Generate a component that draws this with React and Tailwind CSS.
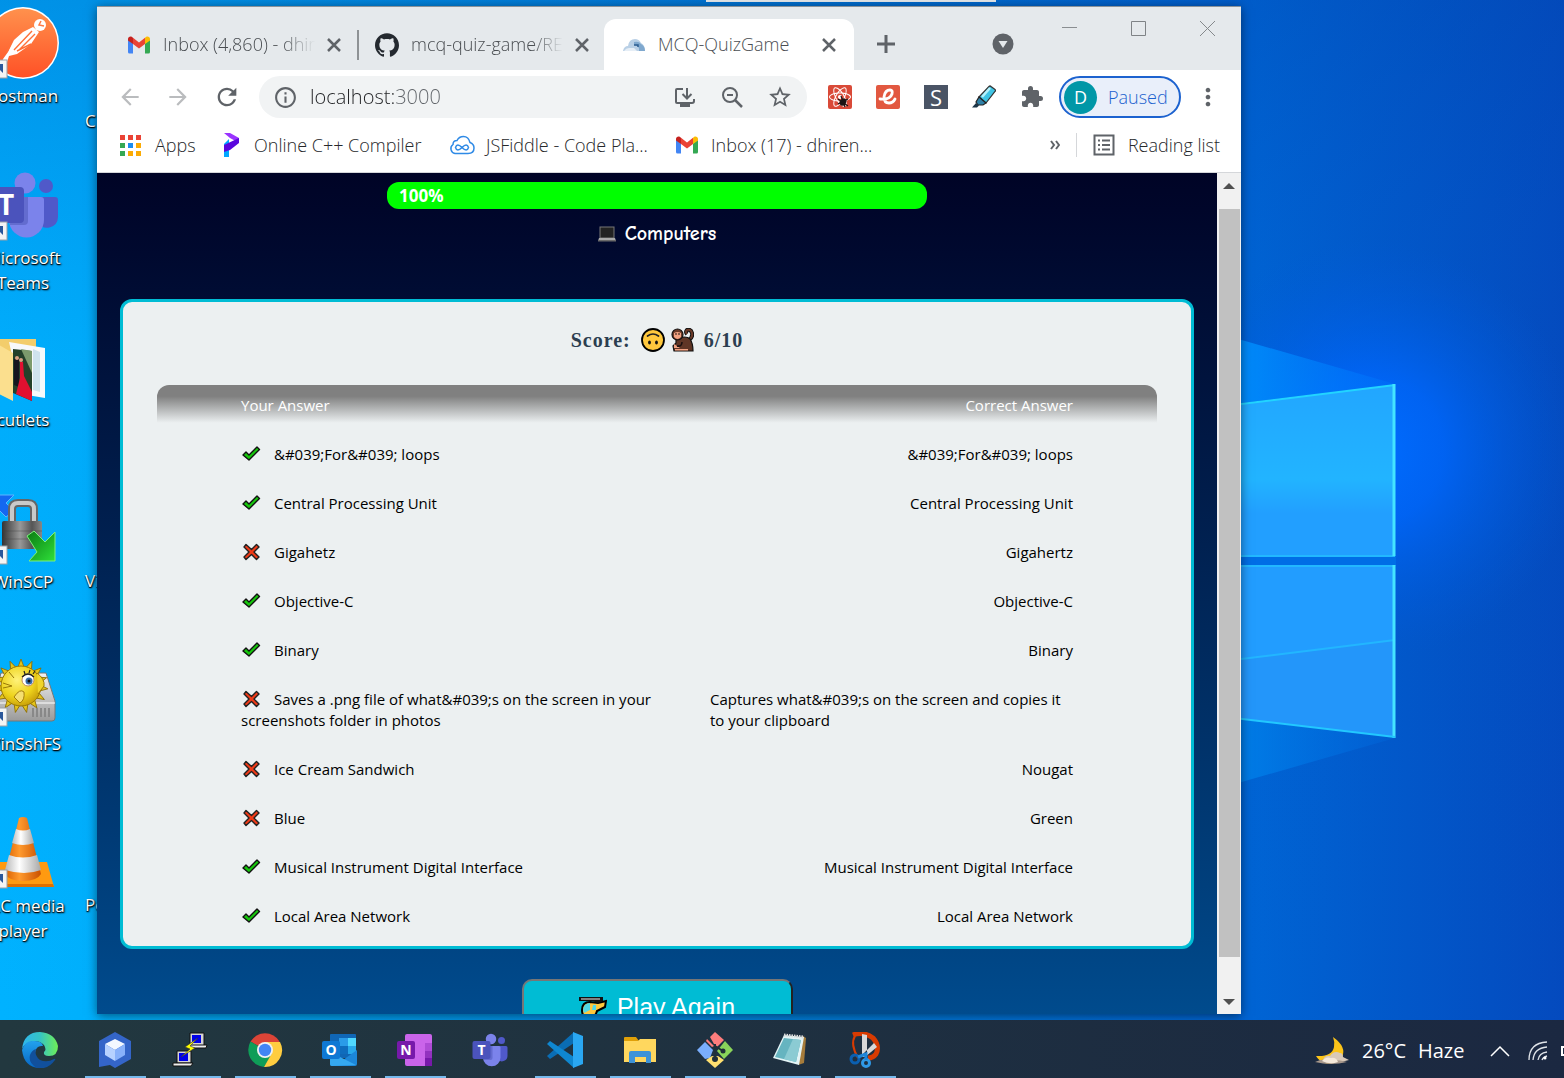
import React from "react";
import {
  MdArrowBack,
  MdArrowForward,
  MdExtension,
  MdInfoOutline,
  MdMoreVert,
  MdRefresh,
  MdStarBorder,
} from "react-icons/md";
import { SiGithub, SiReact } from "react-icons/si";

/* ---------- shared drawings ---------- */

function GmailIcon() {
  return (
    <svg width="24" height="24" viewBox="0 0 24 24" aria-hidden="true" className="shrink-0">
      <path d="M1 6.5V19a1.5 1.5 0 0 0 1.500 1.500H6V10.500z" fill="#4285f4" />
      <path d="M23 6.500V19a1.500 1.500 0 0 1-1.500 1.500H18V10.500z" fill="#34a853" />
      <path d="M6 11V4.800l6 4.700 6-4.700V11l-6 4.600z" fill="#ea4335" />
      <path d="M1 6v1.600L6 11V4.800L5 4C3.300 2.900 1 4 1 6z" fill="#c5221f" />
      <path d="M23 6v1.600L18 11V4.800L19 4c1.700-1.100 4 0 4 2z" fill="#fbbc04" />
    </svg>
  );
}

function TeamsShape({ size }) {
  return (
    <svg width={size} height={size} viewBox="0 0 72 72" aria-hidden="true">
      <circle cx="59" cy="17" r="7" fill="#5059c9" />
      <path d="M48 28h20a3 3 0 0 1 3 3v17a11 11 0 0 1-20 6z" fill="#5059c9" />
      <circle cx="38" cy="14" r="10.500" fill="#7b83eb" />
      <path d="M22 28h32a3 3 0 0 1 3 3v20a17.500 17.500 0 0 1-35 0z" fill="#7b83eb" />
      <path d="M24 28h17v24a4 4 0 0 1-4 4H23z" fill="#5a62c3" opacity=".7" />
      <rect x="1" y="18" width="36" height="36" rx="4" fill="#4b53bc" />
      <text x="19" y="46" textAnchor="middle" fontFamily="Open Sans, sans-serif" fontWeight="700" fontSize="28" fill="#fff">
        T
      </text>
    </svg>
  );
}

function Shortcut() {
  return (
    <g>
      <rect x="1" y="53" width="19" height="18" fill="#f4f4f4" stroke="#9aa0a6" />
      <path d="M5 68c0-6 3-7 5-7l-3-4h9v9l-3-3c-3 0-5 1-6 5z" fill="#2b579a" />
    </g>
  );
}

/* ---------- desktop icons ---------- */

function PostmanArt() {
  return (
    <svg width="72" height="72" viewBox="0 0 72 72" aria-hidden="true">
      <defs>
        <linearGradient id="pm" x1="0" y1="0" x2="0" y2="1">
          <stop offset="0" stopColor="#ff914d" />
          <stop offset="1" stopColor="#ff5126" />
        </linearGradient>
      </defs>
      <circle cx="36" cy="36" r="36" fill="#fff" />
      <circle cx="36" cy="36" r="34.500" fill="url(#pm)" />
      <circle cx="53" cy="18" r="6" fill="#fff" />
      <path d="M54 14l-2 4 5 1" fill="none" stroke="#ff7a45" strokeWidth="1.500" />
      <path d="M46 20l6 5-8 12-14 10-8 2-2 6-7 8 3-11 5-7 6-12 9-8z" fill="#fff" />
      <path d="M45 24L27 43M48 27L32 43M25 33l-5 12M44 37l-14 7" stroke="#ff7038" strokeWidth="1.400" />
      <Shortcut />
    </svg>
  );
}

function TeamsArt() {
  return (
    <div className="relative h-[72px] w-[72px]">
      <TeamsShape size={72} />
      <svg width="72" height="72" viewBox="0 0 72 72" className="absolute inset-0" aria-hidden="true">
        <Shortcut />
      </svg>
    </div>
  );
}

function FolderArt() {
  return (
    <svg width="72" height="72" viewBox="0 0 72 72" aria-hidden="true">
      <path d="M4 8h45v54H4z" fill="#f3cd6b" />
      <path d="M22 11l36 6v50l-24-4z" fill="#f7f9fb" />
      <path d="M46 18l7 3v40l-7-2z" fill="#cfe3ee" />
      <path d="M26 18l19 2v50l-19-8z" fill="#24402a" />
      <path d="M34 18l11 2v22z" fill="#7c9a6c" />
      <path d="M27 28h5v28l-5-2z" fill="#15161f" />
      <circle cx="30" cy="27" r="2" fill="#d9a184" />
      <circle cx="34" cy="29" r="2" fill="#d9a184" />
      <path d="M33 31h3l1 14 8 16v9l-16-7 4-16z" fill="#e01030" />
      <path d="M2 8l24 14v48L2 58z" fill="#fbdf8e" />
    </svg>
  );
}

function LockArt() {
  return (
    <svg width="72" height="72" viewBox="0 0 72 72" aria-hidden="true">
      <defs>
        <linearGradient id="lk" x1="0" x2="1">
          <stop offset="0" stopColor="#333" />
          <stop offset=".45" stopColor="#999" />
          <stop offset=".75" stopColor="#555" />
          <stop offset="1" stopColor="#888" />
        </linearGradient>
        <linearGradient id="gr" x1="0" y1="0" x2="1" y2="1">
          <stop offset="0" stopColor="#0a7a12" />
          <stop offset="1" stopColor="#2fe03a" />
        </linearGradient>
      </defs>
      <path d="M2 2h25l-8 8 8 8-8 6-9-9-8 8z" fill="#1468f0" stroke="#5db4ff" />
      <path d="M25 32V16q0-6 6-6h10q6 0 6 6v16" fill="none" stroke="#666" strokeWidth="8" />
      <path d="M25 32V16q0-6 6-6h10q6 0 6 6v16" fill="none" stroke="#c9c9c9" strokeWidth="4" />
      <rect x="15" y="28" width="40" height="28" rx="2" fill="url(#lk)" />
      <path d="M15 38h40M15 46h40" stroke="#444" strokeOpacity=".4" />
      <path d="M40 43l7-5 11 11 10-10v29H42l8-9z" fill="url(#gr)" stroke="#7cf07c" />
      <Shortcut />
    </svg>
  );
}

function PufferArt() {
  const spikes = [0, 24, 48, 72, 96, 120, 144, 168, 192, 216, 240, 264, 288, 312, 336];
  return (
    <svg width="72" height="72" viewBox="0 0 72 72" aria-hidden="true">
      <defs>
        <linearGradient id="dr" x1="0" y1="0" x2="0" y2="1">
          <stop offset="0" stopColor="#f2f2f2" />
          <stop offset="1" stopColor="#9a9a9a" />
        </linearGradient>
        <radialGradient id="pf" cx=".4" cy=".35" r=".7">
          <stop offset="0" stopColor="#fff27a" />
          <stop offset=".6" stopColor="#eed31c" />
          <stop offset="1" stopColor="#c49a08" />
        </radialGradient>
      </defs>
      <path d="M14 18h45l9 28v17q0 3-3 3H8V40z" fill="url(#dr)" stroke="#777" />
      <path d="M8 48h60" stroke="#fff" />
      <path d="M46 53v9M50 53v9M54 53v9M58 53v9M62 53v9" stroke="#888" strokeWidth="2" />
      {spikes.map((a) => (
        <path key={a} d="M31 12l3-8 3 8z" fill="#e3c41a" stroke="#8a6a00" strokeWidth=".8" transform={`rotate(${a} 34 31)`} />
      ))}
      <circle cx="34" cy="31" r="20" fill="url(#pf)" stroke="#9b7a06" />
      <path d="M50 18q8 6 7 13l-6 8" fill="#f0d52a" stroke="#9b7a06" />
      <circle cx="41" cy="25" r="6" fill="#fff" stroke="#bf8b60" />
      <circle cx="42" cy="26" r="3.500" fill="#356aa8" />
      <circle cx="42" cy="26" r="1.500" fill="#111" />
      <path d="M35 22q6-6 12 0M46 19l2-3M42 18l1-3M38 19l-1-3" fill="none" stroke="#222" strokeWidth="1.200" />
      <path d="M27 42q6-9 10-5 1 8-4 11z" fill="#f5df70" stroke="#a37d0a" />
      <path d="M16 28l9 3-9 2M22 17l5 6" fill="none" stroke="#9b7a06" />
      <Shortcut />
    </svg>
  );
}

function ConeArt() {
  return (
    <svg width="72" height="72" viewBox="0 0 72 72" aria-hidden="true">
      <defs>
        <linearGradient id="cn" x1="0" x2="1">
          <stop offset="0" stopColor="#d95f00" />
          <stop offset=".4" stopColor="#ff9a2e" />
          <stop offset="1" stopColor="#c95000" />
        </linearGradient>
        <linearGradient id="cw" x1="0" x2="1">
          <stop offset="0" stopColor="#b9b9b9" />
          <stop offset=".4" stopColor="#fff" />
          <stop offset="1" stopColor="#a8a8a8" />
        </linearGradient>
      </defs>
      <path d="M12 45h48l7 25H5z" fill="#ff9a10" />
      <path d="M6 67h60l1 3H5z" fill="#e07000" />
      <path d="M32 1q4-2 8 0l14 56q-4 7-18 7t-18-7z" fill="url(#cn)" />
      <path d="M29 12q7 3 14 0l4 14q-11 4-22 0z" fill="url(#cw)" />
      <path d="M22 38q14 5 28 0l4 15q-16 6-36 0z" fill="url(#cw)" />
      <Shortcut />
    </svg>
  );
}

const desktopIcons = [
  { label: "Postman", art: <PostmanArt /> },
  { label: "Microsoft Teams", art: <TeamsArt /> },
  { label: "cutlets", art: <FolderArt /> },
  { label: "WinSCP", art: <LockArt /> },
  { label: "WinSshFS", art: <PufferArt /> },
  { label: "VLC media player", art: <ConeArt /> },
];

function DesktopIcons() {
  const label = "text-[17px] leading-[25px] text-white [text-shadow:1px_1px_2px_#000,0_1px_1px_#000]";
  return (
    <div className="relative w-[97px] shrink-0 overflow-hidden">
      <ul className="-ml-[37px] w-[120px]">
        {desktopIcons.map((it) => (
          <li key={it.label} className="flex h-[162px] flex-col items-center pt-[7px]">
            {it.art}
            <span className={`mt-1 w-[104px] text-center ${label}`}>{it.label}</span>
          </li>
        ))}
      </ul>
      <span className={`absolute left-[85px] top-[108px] ${label}`}>C</span>
      <span className={`absolute left-[85px] top-[568px] ${label}`}>Vi</span>
      <span className={`absolute left-[85px] top-[892px] ${label}`}>Po</span>
    </div>
  );
}

/* ---------- wallpaper ---------- */

function Wallpaper() {
  return (
    <svg className="absolute inset-0 h-full w-full" viewBox="0 0 1564 1020" preserveAspectRatio="none" aria-hidden="true">
      <defs>
        <linearGradient id="bg" x1="0" x2="1">
          <stop offset="0" stopColor="#00b2ff" />
          <stop offset=".1" stopColor="#00aefb" />
          <stop offset=".5" stopColor="#0080dc" />
          <stop offset=".8" stopColor="#0064d4" />
          <stop offset="1" stopColor="#044abe" />
        </linearGradient>
        <linearGradient id="topdim" x1="0" y1="0" x2="0" y2="1">
          <stop offset="0" stopColor="#0048b0" stopOpacity=".3" />
          <stop offset=".35" stopColor="#0058c8" stopOpacity=".06" />
          <stop offset="1" stopColor="#0058c8" stopOpacity="0" />
        </linearGradient>
        <radialGradient id="glow" gradientUnits="userSpaceOnUse" cx="1370" cy="450" r="210">
          <stop offset="0" stopColor="#006cff" />
          <stop offset=".35" stopColor="#0066fc" stopOpacity=".8" />
          <stop offset="1" stopColor="#0058d8" stopOpacity="0" />
        </radialGradient>
        <linearGradient id="pane" x1="0" y1="0" x2="0" y2="1">
          <stop offset="0" stopColor="#22a6ff" />
          <stop offset=".55" stopColor="#22b4ff" />
          <stop offset=".75" stopColor="#229fff" />
          <stop offset="1" stopColor="#229fff" />
        </linearGradient>
        <linearGradient id="beam" x1="0" x2="1">
          <stop offset="0" stopColor="#0098ff" />
          <stop offset="1" stopColor="#0078ff" stopOpacity=".3" />
        </linearGradient>
        <linearGradient id="beam2" x1="0" x2="1">
          <stop offset="0" stopColor="#0086ec" />
          <stop offset="1" stopColor="#006ae0" stopOpacity=".3" />
        </linearGradient>
      </defs>
      <rect width="1564" height="1020" fill="url(#bg)" />
      <rect width="1564" height="1020" fill="url(#topdim)" />
      <rect x="1140" y="230" width="424" height="440" fill="url(#glow)" />
      <path d="M1200 328L1395 384L1200 408z" fill="url(#beam)" />
      <path d="M1200 714L1395 738L1200 794z" fill="url(#beam2)" />
      <rect x="1200" y="555" width="196" height="11" fill="#006ee6" />
      <path d="M1200 409L1395 385V556H1200z" fill="url(#pane)" />
      <path d="M1200 566H1395V737L1200 714z" fill="#229dff" />
      <path d="M1200 664L1395 640V737L1200 714z" fill="#2396fa" />
      <path d="M1200 664L1395 640" stroke="#22b6ff" strokeWidth="2" />
      <path d="M1200 409L1395 385" stroke="#22d4ff" strokeWidth="2" />
      <path d="M1200 556H1395M1200 566H1395" stroke="#22b8ff" strokeWidth="2" />
      <path d="M1394 384V556M1394 565V738" stroke="#44e4ff" strokeWidth="3" />
      <path d="M1200 714L1395 737" stroke="#22c8ff" strokeWidth="2" />
      <rect x="706" y="0" width="290" height="2" fill="#e5e9ec" />
    </svg>
  );
}

/* ---------- browser chrome ---------- */

function TabClose({ name }) {
  return (
    <button type="button" aria-label={`Close ${name}`} className="text-[#5f6368]">
      <svg width="20" height="20" viewBox="0 0 20 20" stroke="currentColor" strokeWidth="2.500">
        <path d="M4 4l12 12M16 4L4 16" />
      </svg>
    </button>
  );
}

function TabStrip() {
  return (
    <div className="flex h-[63px] items-end bg-[#e5e9ec] text-[18px] font-light text-[#4a4e52]">
      <div className="flex h-[51px] w-[260px] items-center pl-[30px]">
        <GmailIcon />
        <span className="ml-3 w-[152px] overflow-hidden whitespace-nowrap [mask-image:linear-gradient(90deg,#000_78%,transparent)]">
          Inbox (4,860) - dhiren
        </span>
        <span className="ml-[9px] flex">
          <TabClose name="Inbox" />
        </span>
      </div>
      <div className="flex h-[51px] items-center">
        <div className="h-[30px] w-[2px] bg-[#8e9295]" />
      </div>
      <div className="flex h-[51px] w-[245px] items-center pl-4">
        <SiGithub size={24} color="#24292f" className="shrink-0" />
        <span className="ml-3 w-[152px] overflow-hidden whitespace-nowrap [mask-image:linear-gradient(90deg,#000_80%,transparent)]">
          mcq-quiz-game/README
        </span>
        <span className="ml-[9px] flex">
          <TabClose name="mcq-quiz-game" />
        </span>
      </div>
      <div className="flex h-[51px] w-[250px] items-center rounded-t-xl bg-white pl-[18px]">
        <svg width="24" height="24" viewBox="0 0 24 24" aria-hidden="true" className="shrink-0">
          <path d="M1 18q1-5 5-5 1-7 7-7 4 0 6 4 4 2 4 8z" fill="#b9d0e6" />
          <path d="M12 9q5-1 7 2 4 2 4 7h-6q1-5-5-6z" fill="#7fa8ce" />
          <path d="M2 18q2-3 5-3h5l3 3z" fill="#e6eef6" />
          <path d="M12 12h4v2" fill="none" stroke="#2c5d91" strokeWidth="1.500" />
        </svg>
        <span className="ml-3 w-[150px] whitespace-nowrap">MCQ-QuizGame</span>
        <span className="ml-[11px] flex">
          <TabClose name="MCQ-QuizGame" />
        </span>
      </div>
      <button type="button" aria-label="New tab" className="mb-[13px] ml-[19px] text-[#5f6368]">
        <svg width="26" height="26" viewBox="0 0 26 26" stroke="currentColor" strokeWidth="3">
          <path d="M4 13h18M13 4v18" />
        </svg>
      </button>
      <div className="flex-1" />
      <button type="button" aria-label="Search tabs" className="mb-[15px] mr-12">
        <svg width="22" height="22" viewBox="0 0 22 22">
          <circle cx="11" cy="11" r="10.500" fill="#5f6368" />
          <path d="M6.500 8h9L11 15z" fill="#e5e9ec" />
        </svg>
      </button>
      <div className="flex items-center gap-[54px] self-start pr-[26px] pt-[14px]">
        <button type="button" aria-label="Minimize">
          <svg width="15" height="15"><path d="M0 6.500h15" stroke="#8a8e91" /></svg>
        </button>
        <button type="button" aria-label="Maximize">
          <svg width="15" height="15"><path d="M.5.5h14v14H.5z" fill="none" stroke="#7f8386" /></svg>
        </button>
        <button type="button" aria-label="Close window">
          <svg width="15" height="15"><path d="M0 0l15 15M15 0L0 15" stroke="#85898c" /></svg>
        </button>
      </div>
    </div>
  );
}

function Toolbar() {
  return (
    <div className="flex h-[54px] items-center bg-white text-[#5f6368]">
      <div className="ml-5 flex gap-[22px]">
        <button type="button" aria-label="Back" className="text-[#babcbe]"><MdArrowBack size={26} /></button>
        <button type="button" aria-label="Forward" className="text-[#babcbe]"><MdArrowForward size={26} /></button>
        <button type="button" aria-label="Reload"><MdRefresh size={28} /></button>
      </div>
      <div className="ml-[18px] flex h-[42px] min-w-0 flex-1 items-center rounded-full bg-[#f1f3f4] px-[14px]">
        <MdInfoOutline size={25} className="shrink-0" />
        <div className="relative ml-3 min-w-0 flex-1 text-[20px]">
          <label className="sr-only" htmlFor="address">Address</label>
          <input
            id="address"
            defaultValue="localhost:3000"
            className="w-full bg-[linear-gradient(90deg,#202124_84px,#5f6368_84px)] bg-clip-text font-light text-transparent caret-black outline-none"
          />
        </div>
        <div className="flex items-center gap-[23px]">
          <button type="button" aria-label="Install">
            <svg width="24" height="24" viewBox="0 0 24 24" fill="none" stroke="currentColor" strokeWidth="2">
              <path d="M10 4H4q-1 0-1 1v12q0 1 1 1h15q2 0 2-2v-2" />
              <path d="M14 3v10M9.500 9l4.500 4.500L18.500 9" />
              <path d="M7 20.500h10" strokeWidth="3" />
            </svg>
          </button>
          <button type="button" aria-label="Zoom">
            <svg width="24" height="24" viewBox="0 0 24 24" fill="none" stroke="currentColor" strokeWidth="2">
              <circle cx="10" cy="10" r="7" />
              <path d="M15 15l7 7" strokeWidth="2.500" />
              <path d="M7 10h6" />
            </svg>
          </button>
          <button type="button" aria-label="Bookmark"><MdStarBorder size={26} /></button>
        </div>
      </div>
      <div className="ml-[21px] flex items-center gap-6">
        <button type="button" aria-label="React developer tools" className="relative flex h-6 w-6 items-center justify-center rounded-xs bg-[#d94a38] text-white">
          <SiReact size={22} />
          <svg width="14" height="14" viewBox="0 0 14 14" className="absolute left-[8px] top-[9px]">
            <ellipse cx="7" cy="8" rx="3" ry="4" fill="#1c1414" transform="rotate(35 7 8)" />
            <path d="M2 5l10 7M2 10l10-5M5 2l4 11" stroke="#1c1414" strokeWidth="1.300" />
          </svg>
        </button>
        <button type="button" aria-label="Extension" className="h-6 w-6">
          <svg width="24" height="24" viewBox="0 0 24 24">
            <rect width="24" height="24" rx="2" fill="#e25840" />
            <path d="M4 14q10 1 12-5 1-4-2-4-5 0-6 7 0 6 5 6 4 0 6-4" fill="none" stroke="#fff" strokeWidth="2.800" strokeLinecap="round" />
          </svg>
        </button>
        <button type="button" className="flex h-6 w-6 items-center justify-center bg-[#4a5465] text-[22px] leading-6 text-white">S</button>
        <button type="button" aria-label="Highlighter">
          <svg width="24" height="24" viewBox="0 0 24 24">
            <path d="M7 12L17 1.500q1-1 2 0l4 3q1 1 0 2L14 18z" fill="#3fc4e4" stroke="#333" strokeWidth="1.200" />
            <path d="M10 12l8-9" stroke="#b7f1fb" strokeWidth="2.500" />
            <path d="M7 12l7 6-3 2-5 0-2-3z" fill="#2f81a8" stroke="#222" strokeWidth="1.200" />
            <path d="M4 18l-4 4.500h5l2-2z" fill="#1c3547" />
          </svg>
        </button>
        <button type="button" aria-label="Extensions"><MdExtension size={24} /></button>
      </div>
      <button type="button" className="ml-[15px] flex h-[42px] w-[122px] shrink-0 items-center rounded-full border-2 border-[#1c62cf] bg-[#e9effa] pl-[3px] text-[18px] font-light text-[#1c62cf]">
        <span className="flex h-[33px] w-[33px] items-center justify-center rounded-full bg-[#0097a7] text-[18px] font-normal text-white">D</span>
        <span className="ml-[11px]">Paused</span>
      </button>
      <button type="button" aria-label="Menu" className="ml-[13px] mr-[19px]"><MdMoreVert size={28} /></button>
    </div>
  );
}

function BookmarksBar() {
  const dots = ["#ea4335", "#ea4335", "#ea4335", "#34a853", "#1a8cf0", "#fbab04", "#34a853", "#fbab04", "#fbab04"];
  return (
    <nav className="flex h-[49px] items-center whitespace-nowrap border-b border-[#d5d7da] bg-white pb-[6px] pl-[23px] pr-[21px] text-[18px] font-light text-[#26282b]">
      <a href="#apps" className="flex w-[102px] items-center gap-[14px]">
        <span className="grid grid-cols-3 gap-[3px]">
          {dots.map((c, i) => (
            <span key={i} className="h-[5px] w-[5px]" style={{ background: c }} />
          ))}
        </span>
        Apps
      </a>
      <a href="#cpp" className="flex w-[227px] items-center gap-3">
        <svg width="20" height="24" viewBox="0 0 20 24" aria-hidden="true" className="shrink-0">
          <path d="M2 0h6l9 5v5L8 5z" fill="#9a33ff" />
          <path d="M2 11l5-5v18H2z" fill="#00a8ff" />
          <path d="M2 12l15-7v5L8 17l-6 2z" fill="#5a06dd" />
        </svg>
        Online C++ Compiler
      </a>
      <a href="#fiddle" className="flex w-[226px] items-center gap-[11px]">
        <svg width="26" height="20" viewBox="0 0 26 20" fill="none" stroke="#2f8ae6" strokeWidth="1.500" aria-hidden="true" className="shrink-0">
          <path d="M6 18.500a5 5 0 0 1-2-9q0-4 4-4 2-4 6.500-4 5 0 6.500 6 4 1.500 4 5.500 0 5.500-6 5.500z" />
          <path d="M13 12.500q-5-5-6.500 0 1.500 5 6.500 0 5-5 6.500 0-1.500 5-6.500 0z" />
        </svg>
        JSFiddle - Code Pla...
      </a>
      <a href="#inbox" className="flex items-center gap-3">
        <GmailIcon />
        Inbox (17) - dhiren...
      </a>
      <span className="flex-1" />
      <button type="button" aria-label="More bookmarks" className="text-[#5f6368]">
        <svg width="10" height="10" viewBox="0 0 10 10" fill="none" stroke="currentColor" strokeWidth="2"><path d="M1 1l3 4-3 4M6 1l3 4-3 4" /></svg>
      </button>
      <span className="mx-4 h-6 w-px bg-[#d5d7da]" />
      <button type="button" className="flex items-center gap-[13px]">
        <svg width="22" height="22" viewBox="0 0 22 22" fill="none" stroke="#5f6368" strokeWidth="2" aria-hidden="true">
          <path d="M1.500 1.500h19v19h-19z" />
          <path d="M5 6.500h2M9 6.500h8M5 11h2M9 11h8M5 15.500h2M9 15.500h8" />
        </svg>
        Reading list
      </button>
    </nav>
  );
}

/* ---------- quiz page ---------- */

function Tick() {
  return (
    <svg width="20" height="20" viewBox="0 0 20 20" role="img" aria-label="correct" className="mr-[13px] inline-block align-[-4px]">
      <path d="M2 11l3-3 3 3 8-8 2.500 2.500L8 16z" fill="#16c60c" stroke="#111" strokeWidth="1.400" strokeLinejoin="round" />
    </svg>
  );
}

function Cross() {
  return (
    <svg width="20" height="20" viewBox="0 0 20 20" role="img" aria-label="wrong" className="mr-[13px] inline-block align-[-4px]">
      <path d="M5 2.500l5.500 5 5-5 2.500 2.500-5 5 5 5-2.500 2.500-5-5-5.500 5L3 15l5-5-5-5z" fill="#f03a17" stroke="#222" strokeWidth="1.400" strokeLinejoin="round" />
    </svg>
  );
}

const answers = [
  [true, "&#039;For&#039; loops", "&#039;For&#039; loops"],
  [true, "Central Processing Unit", "Central Processing Unit"],
  [false, "Gigahetz", "Gigahertz"],
  [true, "Objective-C", "Objective-C"],
  [true, "Binary", "Binary"],
  [false, "Saves a .png file of what&#039;s on the screen in your screenshots folder in photos", "Captures what&#039;s on the screen and copies it to your clipboard"],
  [false, "Ice Cream Sandwich", "Nougat"],
  [false, "Blue", "Green"],
  [true, "Musical Instrument Digital Interface", "Musical Instrument Digital Interface"],
  [true, "Local Area Network", "Local Area Network"],
];

function UpsideDown() {
  return (
    <svg width="24" height="24" viewBox="0 0 24 24" role="img" aria-label="upside-down face">
      <circle cx="12" cy="12" r="11" fill="#ffc83d" stroke="#000" strokeWidth="1.800" />
      <path d="M6.500 8q5.500-4 11 0" fill="none" stroke="#222" strokeWidth="1.700" strokeLinecap="round" />
      <ellipse cx="8.500" cy="14.500" rx="1.400" ry="2" fill="#111" />
      <ellipse cx="15.500" cy="14.500" rx="1.400" ry="2" fill="#111" />
    </svg>
  );
}

function Monkey() {
  return (
    <svg width="24" height="24" viewBox="0 0 24 24" role="img" aria-label="monkey">
      <path d="M19 12q4-3 3-7-1-4-5-3-2 2 0 4" fill="none" stroke="#111" strokeWidth="4" />
      <path d="M19 12q4-3 3-7-1-4-5-3-2 2 0 4" fill="none" stroke="#6b3a28" strokeWidth="2" />
      <path d="M6 11q10-4 14 0 3 4 3 12H4l-1-5 3-3z" fill="#5f3525" stroke="#111" strokeWidth="1.200" />
      <circle cx="7.500" cy="6.500" r="5.500" fill="#6b3a28" stroke="#111" strokeWidth="1.200" />
      <path d="M4 5q3.500-2 7 0v4q-3.500 4-7 0z" fill="#f2a282" />
      <circle cx="6" cy="6" r=".8" />
      <circle cx="9" cy="6" r=".8" />
      <path d="M4 16l6 4H4z" fill="#f2a282" />
      <path d="M5 21h13v1.500H5z" fill="#f2a282" />
      <path d="M12 14q0 5-5 4" fill="none" stroke="#1b1110" strokeWidth="1.600" />
    </svg>
  );
}

function QuizPage() {
  return (
    <main className="flex min-w-0 flex-1 flex-col items-center overflow-hidden bg-linear-to-b from-[#000426] to-[#004b8d]">
      <div className="mt-[9px] h-[27px] w-[540px] shrink-0 rounded-xl bg-[#00ff00] pl-3 text-[17px] font-bold leading-[27px] text-white">100%</div>
      <h1 className="mt-[11px] flex shrink-0 items-center gap-[9px] font-['Comic_Neue','Comic_Sans_MS','Lato',sans-serif] text-[20px] font-bold leading-[27px] text-white">
        <svg width="18" height="16" viewBox="0 0 18 16" aria-hidden="true">
          <rect x="2" y="1" width="14" height="11" fill="#222" stroke="#777" />
          <path d="M1 12h16l1 3H0z" fill="#a9a9a9" />
          <path d="M0 14h18v1.500H0z" fill="#6a6a6a" />
        </svg>
        Computers
      </h1>
      <section className="mt-[52px] shrink-0 self-stretch px-[23px]">
        <div className="rounded-xl border-3 border-[#00bcd4] bg-[#ecf0f1] px-[34px] pb-[5px]">
          <h2 className="flex items-center justify-center gap-[10px] pt-[26px] font-['Liberation_Serif',serif] text-[20px] font-bold leading-6 tracking-wider text-[#2c3e50]">
            <span>Score:</span>
            <span className="flex gap-[5px]"><UpsideDown /><Monkey /></span>
            <span>6/10</span>
          </h2>
          <div className="mt-[33px] overflow-hidden rounded-t-xl">
            <table className="w-full table-fixed text-[15px] leading-[21px] text-black">
              <thead>
                <tr className="bg-[linear-gradient(#808080_25%,transparent_84%)] text-white">
                  <th className="pb-[14px] pl-[84px] pt-[10px] text-left font-normal">Your Answer</th>
                  <th className="pb-[14px] pr-[84px] pt-[10px] text-right font-normal">Correct Answer</th>
                </tr>
              </thead>
              <tbody>
                {answers.map(([ok, mine, right]) => (
                  <tr key={mine} className="align-top">
                    <td className="py-[14px] pl-[84px]">{ok ? <Tick /> : <Cross />}{mine}</td>
                    <td className="py-[14px] pr-[84px] text-right">
                      <span className="inline-block max-w-[363px] text-left align-top">{right}</span>
                    </td>
                  </tr>
                ))}
              </tbody>
            </table>
          </div>
        </div>
      </section>
      <button
        type="button"
        className="mt-[30px] flex h-[58px] w-[271px] shrink-0 items-center justify-center gap-[10px] rounded-[10px] border-2 border-b-[#222] border-l-[#767676] border-r-[#222] border-t-[#767676] bg-[#00bcd4] font-['Liberation_Sans',sans-serif] text-[25px] text-white"
      >
        <svg width="28" height="24" viewBox="0 0 28 24" aria-hidden="true">
          <path d="M3 14q0-8 8-8l8 1 8-2-1 6-8 4q-2 7-8 7-7 0-7-8z" fill="#ffc83d" stroke="#000" strokeWidth="2" />
          <path d="M4 14q1-7 7-7v7l-6 3z" fill="#50d8e8" />
          <path d="M0 1h24v4l-5 2-6-2H0z" fill="#111" />
          <path d="M2 3h19" stroke="#ccc" strokeWidth="1.200" />
          <path d="M14 9h3v5h-4z" fill="#50d8e8" />
        </svg>
        Play Again
      </button>
    </main>
  );
}

function Scrollbar() {
  return (
    <div className="flex w-6 shrink-0 flex-col items-center bg-[#f1f1f1]" aria-hidden="true">
      <div className="flex h-9 items-start pt-[10px]">
        <svg width="12" height="6"><path d="M0 6l6-6 6 6z" fill="#505050" /></svg>
      </div>
      <div className="mx-[2px] w-[21px] flex-1 bg-[#c1c1c1]" />
      <div className="flex h-[57px] items-end pb-[9px]">
        <svg width="12" height="6"><path d="M0 0l6 6 6-6z" fill="#505050" /></svg>
      </div>
    </div>
  );
}

/* ---------- taskbar ---------- */

const Edge = () => (
  <svg width="36" height="36" viewBox="0 0 36 36">
    <defs>
      <linearGradient id="e1" x1="0" x2="1"><stop offset="0" stopColor="#2fb5ee" /><stop offset=".5" stopColor="#35c4c4" /><stop offset="1" stopColor="#6fee55" /></linearGradient>
      <linearGradient id="e2" x1="0" y1="0" x2="0" y2="1"><stop offset="0" stopColor="#22a2ee" /><stop offset="1" stopColor="#0766c4" /></linearGradient>
    </defs>
    <path d="M0 17Q2 0 18 0q15 1 18 14 0 10-9 10-6 0-5-4 3-2 0-7-6-6-14-3-6 2-8 7z" fill="url(#e1)" />
    <path d="M0 18q3-10 12-9 8 0 9 5-7-1-8 7-1 9 7 13l-3 2Q2 35 0 18z" fill="url(#e2)" />
    <path d="M14 17q-2 6 4 11 7 3 14-1 2-1 1 1-7 10-18 8-9-5-7-13 2-5 6-6z" fill="#11509c" />
  </svg>
);
const Cube = () => (
  <svg width="36" height="36" viewBox="0 0 36 36">
    <path d="M18 0l16 9v18l-16 9-5-3-11 2V9z" fill="#3465c8" />
    <path d="M8 12l10-5 10 5-10 6z" fill="#f3f8ff" />
    <path d="M8 12l10 6v11L8 23z" fill="#b7d2ff" />
    <path d="M28 12l-10 6v11l10-6z" fill="#88b1fa" />
  </svg>
);
const Putty = () => (
  <svg width="36" height="36" viewBox="0 0 36 36">
    <path d="M18 1h14v13H18z" fill="#d4d4d4" stroke="#111" />
    <path d="M20 3h9v8h-9z" fill="#0000e8" />
    <path d="M16 13h19l-1 3H18z" fill="#eee" stroke="#111" />
    <path d="M5 19h14v12H5z" fill="#d4d4d4" stroke="#111" />
    <path d="M7 21h9v8H7z" fill="#0000e8" />
    <path d="M1 31h20l-2 3H1z" fill="#eee" stroke="#111" />
    <path d="M26 6l-13 9 5 2-9 8 14-9-5-2z" fill="#ff0" stroke="#333" strokeWidth=".6" />
  </svg>
);
const Chrome = () => (
  <svg width="36" height="36" viewBox="0 0 36 36">
    <path d="M18 18L3.500 9.500A17 17 0 0 1 32.600 9.500z" fill="#db4437" />
    <path d="M18 18L3.500 9.500A17 17 0 0 0 17 34.900L25 22z" fill="#0f9d58" />
    <path d="M18 10h15a17 17 0 0 1-16 25l8-14z" fill="#ffcd40" />
    <circle cx="18" cy="18" r="8" fill="#f1f1f1" />
    <circle cx="18" cy="18" r="6.200" fill="#4285f4" />
  </svg>
);
const OfficeLetter = ({ letter, fill }) => (
  <>
    <rect x="0" y="9" width="18" height="18" rx="2" fill={fill} />
    <text x="9" y="23" textAnchor="middle" fontFamily="Open Sans, sans-serif" fontWeight="700" fontSize="14" fill="#fff">{letter}</text>
  </>
);
const Outlook = () => (
  <svg width="36" height="36" viewBox="0 0 36 36">
    <rect x="8" y="2" width="26" height="24" rx="1" fill="#1066b5" />
    <path d="M17 6h9v8h-9z" fill="#2a9be8" /><path d="M26 6h8v8h-8z" fill="#50d9ff" /><path d="M17 14h9v8h-9z" fill="#0f6cbd" /><path d="M26 14h8v8h-8z" fill="#28a8ea" />
    <path d="M8 20l13 8 14-10v14q0 2-2 2H10q-2 0-2-2z" fill="#1c86d8" />
    <path d="M8 20l26 13-24 1q-2 0-2-2z" fill="#35a8f0" />
    <OfficeLetter letter="O" fill="#0f78d4" />
  </svg>
);
const OneNote = () => (
  <svg width="36" height="36" viewBox="0 0 36 36">
    <rect x="8" y="2" width="27" height="32" rx="2" fill="#ca64ea" />
    <path d="M28 11h7v8h-7z" fill="#ae4bd5" /><path d="M28 19h7v7h-7z" fill="#9332bf" /><path d="M28 26h7v8h-7z" fill="#7719aa" />
    <OfficeLetter letter="N" fill="#7719aa" />
  </svg>
);
const Code = () => (
  <svg width="36" height="36" viewBox="0 0 36 36">
    <path d="M0 24l3 3L27 11V0z" fill="#0a6db4" />
    <path d="M0 12l3-3L27 25v11z" fill="#0f87d0" />
    <path d="M26 0l10 4v28l-10 4z" fill="#2aa7f2" />
  </svg>
);
const Explorer = () => (
  <svg width="36" height="36" viewBox="0 0 36 36">
    <path d="M2 6q0-1 1-1h11l3 4H2z" fill="#e0a008" />
    <path d="M2 9h14l2-2h16v23H2z" fill="#ffd75e" />
    <path d="M7 31V21q0-2 2-2h18q2 0 2 2v10h-5v-6H13v6z" fill="#3d93d8" />
  </svg>
);
const Git = () => (
  <svg width="36" height="36" viewBox="0 0 36 36">
    <path d="M18 0l9 8-7 7-3-3-4-7z" fill="#fd7d7d" />
    <path d="M10 7l7 7-2 1-6-6z" fill="#fd7d7d" />
    <path d="M8 10l8 8-3 8-5 1-8-9z" fill="#7aaefc" />
    <path d="M28 9l8 9-9 9-7-8z" fill="#8ad45a" />
    <path d="M9 28l6-4h6l6 4-9 8z" fill="#ffe070" />
    <path d="M18 12v15M18 14l8 5" stroke="#202f38" strokeWidth="2" />
    <circle cx="18" cy="27" r="3" fill="#202f38" /><circle cx="26" cy="19" r="2.500" fill="#202f38" />
  </svg>
);
const Notepad = () => (
  <svg width="36" height="36" viewBox="0 0 36 36">
    <path d="M31 4l3 2-2 25-6 2z" fill="#a67c3b" />
    <path d="M12 3l20 2-5 28L1 26z" fill="#e3f4f6" />
    <path d="M12 6l17 2-5 22L3 25z" fill="#66b4c0" />
    <path d="M21 7l8 1-5 22-12-3z" fill="#8bcbd3" />
    <path d="M12 3l20 2" stroke="#ddd" strokeWidth="3" strokeDasharray="1.500 1" />
  </svg>
);
const Snip = () => (
  <svg width="36" height="36" viewBox="0 0 36 36">
    <path d="M11 26Q3 12 8 4" fill="none" stroke="#d83b01" strokeWidth="2" />
    <path d="M6 3q10-4 20 3 7 8 3 16-3 4-8 4" fill="none" stroke="#d83b01" strokeWidth="5" />
    <path d="M15 2l5 1v22h-5zM27 11l-11 11 2 3 12-10z" fill="#d8d8d8" />
    <circle cx="8" cy="27" r="4" fill="none" stroke="#0b5fb0" strokeWidth="3" />
    <circle cx="19" cy="31" r="3.500" fill="none" stroke="#2f9ae8" strokeWidth="3" />
    <path d="M11 25l8-3v6" stroke="#1e86d8" strokeWidth="3" fill="none" />
  </svg>
);

const apps = [
  ["Edge", <Edge />, false], ["Cube", <Cube />, true], ["PuTTY", <Putty />, true], ["Chrome", <Chrome />, true],
  ["Outlook", <Outlook />, true], ["OneNote", <OneNote />, true], ["Teams", <TeamsShape size={36} />, false],
  ["Code", <Code />, true], ["File Explorer", <Explorer />, true], ["Git", <Git />, true],
  ["Notepad", <Notepad />, true], ["Snipping Tool", <Snip />, true],
];

function Taskbar() {
  return (
    <footer className="relative flex h-[58px] shrink-0 items-center overflow-hidden bg-linear-to-r from-[#22383f] to-[#1b2841] pl-[10px] text-white">
      <div className="flex h-full gap-[14px]">
        {apps.map(([name, icon, open]) => (
          <button
            key={name}
            type="button"
            aria-label={name}
            className={`flex w-[61px] items-center justify-center border-b-2 pr-px pt-[3px] ${open ? "border-[#76b9ed]" : "border-transparent"}`}
          >
            {icon}
          </button>
        ))}
      </div>
      <div className="flex-1" />
      <div className="flex shrink-0 items-center whitespace-nowrap pt-1 text-[20px]">
        <svg width="36" height="30" viewBox="0 0 36 30" aria-hidden="true">
          <path d="M19 1q14 10 9 20-6 9-18 6-5-2-8-7 16 1 18-9 1-5-1-10z" fill="#fcc419" />
          <path d="M9 24q2-5 7-4 4-6 10-3 3 0 3 4l6 3-8 2H9z" fill="#d9c9b8" />
          <path d="M1 26q8-4 16-2 10 0 16 2-16 4-32 0z" fill="#a8988c" />
          <path d="M8 25q4-5 9-3 5-1 7 4-8 3-16-1z" fill="#f5e9da" />
        </svg>
        <span className="ml-3 w-[45px]">26°C</span>
        <span className="ml-[11px] w-[46px]">Haze</span>
        <svg width="20" height="12" viewBox="0 0 20 12" fill="none" stroke="#fff" strokeWidth="1.500" className="ml-[26px]" aria-hidden="true">
          <path d="M1 11l9-9 9 9" />
        </svg>
        <svg width="20" height="20" viewBox="0 0 20 20" fill="none" stroke="#dfe3e8" strokeWidth="1.300" className="ml-[18px]" aria-hidden="true">
          <path d="M1 19Q1 2 19 1M5 19Q6 7 19 6M10 19q1-7 9-8M14 19q1-3 5-4" />
          <circle cx="17" cy="17" r="1.500" fill="#fff" stroke="none" />
        </svg>
        <span className="ml-[13px] h-[10px] w-[3px] border-y-2 border-l-2 border-white" />
      </div>
    </footer>
  );
}

export default function App() {
  return (
    <div className="flex h-screen flex-col overflow-hidden font-['Open_Sans',sans-serif]">
      <div className="relative flex min-h-0 flex-1">
        <Wallpaper />
        <DesktopIcons />
        <div className="relative mb-[6px] mr-[323px] mt-[6px] flex min-w-0 flex-1 flex-col overflow-hidden border-t border-[#8a9299] shadow-[0_2px_10px_rgba(0,0,0,0.5)]">
          <TabStrip />
          <Toolbar />
          <BookmarksBar />
          <div className="flex min-h-0 flex-1">
            <QuizPage />
            <Scrollbar />
          </div>
        </div>
      </div>
      <Taskbar />
    </div>
  );
}
